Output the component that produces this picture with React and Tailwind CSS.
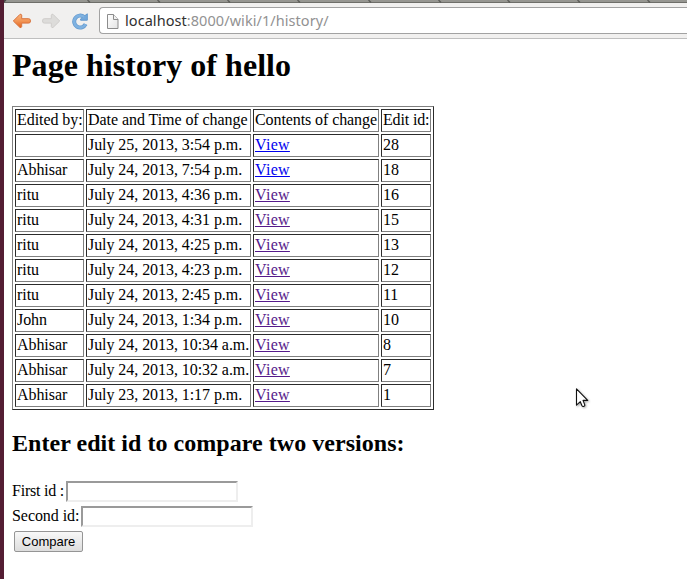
import React from "react";

const rows = [
  ["", "July 25, 2013, 3:54 p.m.", "28", false],
  ["Abhisar", "July 24, 2013, 7:54 p.m.", "18", false],
  ["ritu", "July 24, 2013, 4:36 p.m.", "16", true],
  ["ritu", "July 24, 2013, 4:31 p.m.", "15", true],
  ["ritu", "July 24, 2013, 4:25 p.m.", "13", true],
  ["ritu", "July 24, 2013, 4:23 p.m.", "12", true],
  ["ritu", "July 24, 2013, 2:45 p.m.", "11", true],
  ["John", "July 24, 2013, 1:34 p.m.", "10", true],
  ["Abhisar", "July 24, 2013, 10:34 a.m.", "8", true],
  ["Abhisar", "July 24, 2013, 10:32 a.m.", "7", true],
  ["Abhisar", "July 23, 2013, 1:17 p.m.", "1", true],
];

const tabEdges = [88, 158, 228, 298, 369, 439, 508, 578, 648];

function Cell({ children }) {
  return (
    <td className="h-[23px] border border-t-[#2c2c2c] border-l-[#2c2c2c] border-r-[#808080] border-b-[#808080] px-px pt-0 pb-[2px] align-middle leading-[19px] tracking-[-0.06px] whitespace-nowrap">
      {children}
    </td>
  );
}

function TabStrip() {
  return (
    <svg className="block h-[3px] w-[683px] shrink-0" viewBox="4 0 683 3">
      <rect x="4" width="683" height="3" fill="#969691" />
      <rect x="4" y="2" width="683" height="1" fill="#6e6e69" />
      {tabEdges.map((x) => (
        <path key={x} d={`M${x - 0.5} 0l2.5 2.5`} stroke="#5c5c58" strokeWidth="1.3" />
      ))}
      <path d="M4 0h2.5L4 3z" fill="#4a4a47" />
    </svg>
  );
}

function BackIcon() {
  return (
    <svg className="h-4 w-5" viewBox="0 0 20 16">
      <defs>
        <linearGradient id="back" x1="0" y1="0" x2="0" y2="1">
          <stop offset="0" stopColor="#f9b27c" />
          <stop offset="0.5" stopColor="#f29656" />
          <stop offset="1" stopColor="#e2621b" />
        </linearGradient>
      </defs>
      <path d="M1.3 8L8 1.3q1.3-.5 1.7.8v3.6h7q1.8 0 1.8 2.2t-1.8 2.2h-7v3.5q-.4 1.5-1.7.9z" fill="url(#back)" stroke="#d97540" strokeLinejoin="round" />
    </svg>
  );
}

function ForwardIcon() {
  return (
    <svg className="h-4 w-5" viewBox="0 0 20 16">
      <path d="M18.7 8L12 1.3q-1.3-.5-1.7.8v3.6h-7Q1.5 5.7 1.5 7.9t1.8 2.2h7v3.5q.4 1.5 1.7.9z" fill="#dddcda" stroke="#cfcdcb" strokeLinejoin="round" />
    </svg>
  );
}

function ReloadIcon() {
  return (
    <svg className="h-[18px] w-[18px]" viewBox="0 0 18 18" fill="none">
      <path d="M14.6 12.2a6 6 0 1 1-1.5-7.2" stroke="#6499cd" strokeWidth="4" />
      <path d="M16.3 1.8v6.4H9.6V6.9z" fill="#73a9dc" stroke="#6499cd" strokeLinejoin="round" />
      <path d="M14.6 12.2a6 6 0 1 1-1.5-7.2" stroke="#7fb2e1" strokeWidth="2.6" />
    </svg>
  );
}

function PageIcon() {
  return (
    <svg className="h-4 w-3 translate-y-px" viewBox="0 0 12 16">
      <defs>
        <linearGradient id="page" x1="0" y1="0" x2="1" y2="1">
          <stop offset="0" stopColor="#fff" />
          <stop offset="1" stopColor="#e4e4e4" />
        </linearGradient>
      </defs>
      <path d="M.5 .5h6l4.5 5v9H.5z" fill="url(#page)" stroke="#8c8c8c" />
      <path d="M6.5 .5v5H11" fill="#f1f1f1" stroke="#8c8c8c" />
    </svg>
  );
}

function Pointer() {
  return (
    <svg className="absolute top-[387px] left-[574px] h-[24px] w-[18px] drop-shadow-[1px_1px_1px_rgba(0,0,0,0.35)]" viewBox="0 0 18 24">
      <path d="M2.5 1.8v16.4l3.8-3.5 1.7 4q.5 1 1.6.7 1.6-.5 1.1-1.8L9 13.4h4.7z" fill="#fff" stroke="#111" strokeWidth="1.1" strokeLinejoin="round" />
    </svg>
  );
}

const fieldClass =
  "h-[21px] w-[172px] border-2 border-t-[#9a9a9a] border-l-[#9a9a9a] border-r-[#eeeeee] border-b-[#eeeeee] bg-white outline-none";

export default function App() {
  return (
    <div className="relative flex h-[579px] w-[687px] overflow-hidden bg-white font-['Liberation_Serif',serif] text-base text-black">
      <div className="w-1 shrink-0 bg-[#541d33]" />
      <div className="flex w-[683px] flex-col">
        <TabStrip />
        <header className="flex h-9 shrink-0 border-b border-[#bfbfbf] bg-[#f1f0ef] pt-1 pl-2">
          <div className="flex w-[87px] shrink-0 items-center pb-1">
            <BackIcon />
            <span className="w-[9px]" />
            <ForwardIcon />
            <span className="w-[10px]" />
            <ReloadIcon />
          </div>
          <div className="flex h-[27px] flex-1 items-center rounded-l-[4px] border border-r-0 border-[#a2a2a2] bg-white pl-[7px]">
            <PageIcon />
            <span className="ml-[6px] pb-px font-['Noto_Sans',sans-serif] text-[14.5px] leading-5 tracking-[0.06px] whitespace-nowrap text-[#929292]">
              <span className="text-[#303030]">localhost</span>:8000/wiki/1/history/
            </span>
          </div>
        </header>
        <main className="flex flex-col items-start pl-2">
          <h1 className="mt-[8px] text-[32px] leading-[37px] font-bold tracking-[0.04px]">Page history of hello</h1>
          <table className="mt-[22px] w-[422px] table-fixed border-separate border-spacing-[2px] border border-t-[#808080] border-r-[#2c2c2c] border-b-[#2c2c2c] border-l-[#808080]">
            <colgroup>
              <col className="w-[69px]" />
              <col className="w-[165px]" />
              <col className="w-[126px]" />
              <col className="w-[50px]" />
            </colgroup>
            <tbody>
              <tr>
                <Cell>Edited by:</Cell>
                <Cell>Date and Time of change</Cell>
                <Cell><span className="tracking-[-0.09px]">Contents of change</span></Cell>
                <Cell><span className="tracking-[-0.15px]">Edit id:</span></Cell>
              </tr>
              {rows.map(([name, date, id, visited]) => (
                <tr key={id}>
                  <Cell>{name}</Cell>
                  <Cell>{date}</Cell>
                  <Cell>
                    <a href="#" className={visited ? "tracking-[0.3px] text-[#551a8b] underline" : "tracking-[0.3px] text-[#0000ee] underline"}>View</a>
                  </Cell>
                  <Cell>{id}</Cell>
                </tr>
              ))}
            </tbody>
          </table>
          <h2 className="mt-[20px] text-2xl leading-[27px] font-bold tracking-[0.04px]">Enter edit id to compare two versions:</h2>
          <form className="mt-[24px] flex flex-col items-start">
            <label className="flex h-[25px] items-start leading-[20px]">
              <span className="w-[54px] tracking-[-0.22px] whitespace-nowrap">First id :</span>
              <input className={fieldClass} />
            </label>
            <label className="flex h-[25px] items-start leading-[20px]">
              <span className="w-[69px] tracking-[-0.06px] whitespace-nowrap">Second id:</span>
              <input className={fieldClass} />
            </label>
            <button type="button" className="ml-[2px] h-[21px] w-[69px] rounded-[2px] border border-[#959595] bg-linear-to-b from-[#f8f8f8] to-[#dddddd] font-['Liberation_Sans',sans-serif] text-[13px] leading-[19px]">
              Compare
            </button>
          </form>
        </main>
      </div>
      <Pointer />
    </div>
  );
}
